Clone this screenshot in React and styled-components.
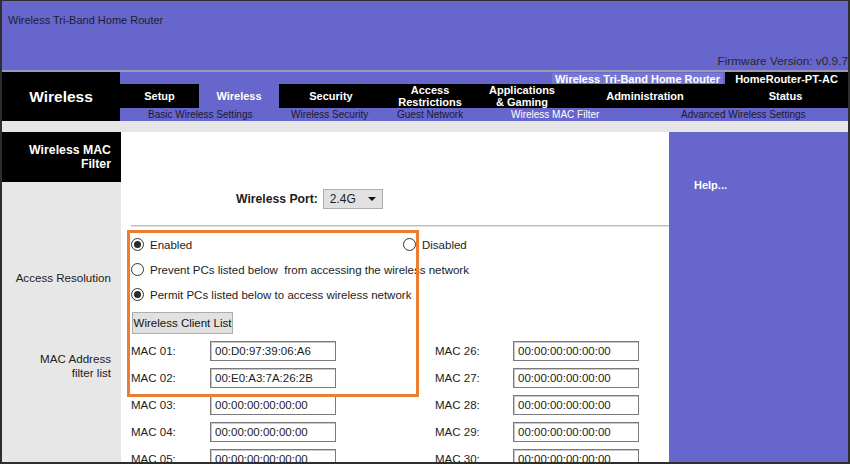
import React from "react";
import styled, { createGlobalStyle } from "styled-components";

const GlobalStyle = createGlobalStyle`
    body {
        margin: 0;
        font-family: "Liberation Sans", Arial, sans-serif;
        background: #ffffff;
    }
`;

const Frame = styled.div`
    width: 850px;
    height: 464px;
    box-sizing: border-box;
    border: 2px solid #2e2e2e;
    border-top-width: 1px;
    overflow: hidden;
    display: flex;
    flex-direction: column;
    color: #1c1c1c;
`;

const Header = styled.div`
    height: 71px;
    flex: none;
    box-sizing: border-box;
    background: #6666cc;
    border-bottom: 2px solid #9a9ab4;
    display: flex;
    flex-direction: column;
    justify-content: space-between;
    padding: 12px 0 2px 6px;
    font-size: 11px;
    line-height: 14px;
    color: #1e1e2e;
`;

const Firmware = styled.div`
    align-self: flex-end;
    font-size: 11.8px;
    color: #262626;
`;

const Nav = styled.div`
    display: flex;
    height: 49px;
    flex: none;
`;

const Brand = styled.div`
    width: 118px;
    background: #000;
    color: #fff;
    font-weight: bold;
    font-size: 15.5px;
    display: flex;
    align-items: center;
    justify-content: center;
    padding-top: 1px;
    box-sizing: border-box;
`;

const NavBody = styled.div`
    flex: 1;
    display: flex;
    flex-direction: column;
`;

const ModelRow = styled.div`
    height: 12px;
    background: #6666cc;
    display: flex;
    justify-content: flex-end;
    align-items: stretch;
    font-weight: bold;
    font-size: 11px;
    line-height: 12px;
    color: #fff;
`;

const ModelName = styled.span`
    background: #7777d6;
    padding: 0 3px;
    margin: 1px 2px 0 0;
`;

const DeviceName = styled.span`
    width: 123px;
    background: #000;
    text-align: center;
    padding-top: 1px;
`;

const Tabs = styled.div`
    height: 24px;
    display: flex;
    background: #000;
`;

const Tab = styled.div`
    width: ${(p) => (p.$w ? `${p.$w}px` : "auto")};
    flex: ${(p) => (p.$w ? "none" : "1")};
    background: ${(p) => (p.$active ? "#6666cc" : "#000")};
    color: #fff;
    font-weight: bold;
    font-size: 11px;
    line-height: 12px;
    display: flex;
    align-items: center;
    justify-content: center;
    text-align: center;
`;

const SubNav = styled.div`
    height: 13px;
    background: #6666cc;
    display: flex;
    padding-left: 28px;
    font-size: 10px;
    line-height: 13px;
`;

const SubLink = styled.span`
    width: ${(p) => (p.$w ? `${p.$w}px` : "auto")};
    flex: none;
    color: ${(p) => (p.$active ? "#ffffff" : "#1a1a30")};
    white-space: nowrap;
`;

const Strip = styled.div`
    height: 11px;
    flex: none;
    background: #e6e6e6;
`;

const Main = styled.div`
    flex: 1;
    display: flex;
    min-height: 0;
`;

const Side = styled.div`
    width: 119px;
    background: #e7e7e7;
    display: flex;
    flex-direction: column;
    align-items: stretch;
`;

const PageTitle = styled.div`
    height: 50px;
    box-sizing: border-box;
    background: #000;
    color: #fff;
    font-weight: bold;
    font-size: 12.3px;
    line-height: 14px;
    text-align: right;
    padding: 11px 10px 0 0;
`;

const SideLabel = styled.div`
    margin-top: ${(p) => p.$top}px;
    text-align: right;
    padding-right: 10px;
    font-size: 11.6px;
    line-height: 14px;
    color: #222;
`;

const Content = styled.div`
    width: 548px;
    background: #fff;
    position: relative;
    display: flex;
    flex-direction: column;
    font-size: 11.5px;
`;

const PortRow = styled.div`
    margin: 57px 0 0 115px;
    display: flex;
    align-items: center;
    gap: 5px;
    height: 20px;
`;

const PortLabel = styled.span`
    font-weight: bold;
    font-size: 12.2px;
`;

const Select = styled.div`
    width: 60px;
    height: 20px;
    box-sizing: border-box;
    background: #e1e1e1;
    border: 1px solid #adadad;
    display: flex;
    align-items: center;
    justify-content: space-between;
    padding: 0 6px 0 6px;
    font-size: 12px;
`;

const Caret = styled.span`
    width: 0;
    height: 0;
    border-left: 4px solid transparent;
    border-right: 4px solid transparent;
    border-top: 4px solid #111;
`;

const Rule = styled.div`
    margin: 16px 0 0 10px;
    border-top: 1px solid #bcbcbc;
    border-bottom: 1px solid #e2e2e2;
`;

const Options = styled.div`
    margin-top: 5px;
    padding-left: 10px;
    display: flex;
    flex-direction: column;
`;

const OptionRow = styled.div`
    height: 25px;
    display: flex;
    align-items: center;
`;

const Option = styled.label`
    width: ${(p) => (p.$w ? `${p.$w}px` : "auto")};
    display: flex;
    align-items: center;
    gap: 6px;
    white-space: nowrap;
`;

const Radio = styled.span`
    width: 13px;
    height: 13px;
    box-sizing: border-box;
    border-radius: 50%;
    border: 1px solid #333;
    background: #fff;
    display: flex;
    align-items: center;
    justify-content: center;
    flex: none;
    &::after {
        content: "";
        width: 7px;
        height: 7px;
        border-radius: 50%;
        background: ${(p) => (p.$on ? "#2a2a2a" : "transparent")};
    }
`;

const Button = styled.button`
    margin: 5px 0 0 11px;
    width: 101px;
    height: 22px;
    background: #e1e1e1;
    border: 1px solid #adadad;
    border-radius: 0;
    font-family: "Liberation Sans", Arial, sans-serif;
    font-size: 11.5px;
    white-space: nowrap;
    color: #111;
    padding: 0;
`;

const MacGrid = styled.div`
    margin-top: 3px;
    padding-left: 10px;
    display: grid;
    grid-template-columns: 79px 126px 99px 78px 126px;
    grid-auto-rows: 27px;
    align-items: center;
`;

const MacLabel = styled.span``;

const MacInput = styled.div`
    height: 20px;
    box-sizing: border-box;
    border: 1px solid #7a7a7a;
    box-shadow: inset 1px 1px 0 #c8c8c8;
    padding-left: 4px;
    line-height: 18px;
    background: #fff;
`;

const Gap = styled.span``;

const Highlight = styled.div`
    position: absolute;
    left: 6px;
    top: 98px;
    width: 292px;
    height: 167px;
    box-sizing: border-box;
    border: 3px solid #ed7d31;
    pointer-events: none;
`;

const Help = styled.div`
    flex: 1;
    background: #6666cc;
    color: #fff;
    font-weight: bold;
    font-size: 11px;
    padding: 47px 0 0 25px;
`;

const tabs = [
    { label: "Setup", w: 79 },
    { label: "Wireless", w: 80, active: true },
    { label: "Security", w: 104 },
    { label: ["Access", "Restrictions"], w: 94 },
    { label: ["Applications", "& Gaming"], w: 90 },
    { label: "Administration", w: 156 },
    { label: "Status" },
];

const subLinks = [
    { label: "Basic Wireless Settings", w: 143 },
    { label: "Wireless Security", w: 106 },
    { label: "Guest Network", w: 114 },
    { label: "Wireless MAC Filter", w: 170, active: true },
    { label: "Advanced Wireless Settings" },
];

const macs = [
    ["01", "00:D0:97:39:06:A6", "26"],
    ["02", "00:E0:A3:7A:26:2B", "27"],
    ["03", "00:00:00:00:00:00", "28"],
    ["04", "00:00:00:00:00:00", "29"],
    ["05", "00:00:00:00:00:00", "30"],
];

export default function App() {
    return (
        <>
            <GlobalStyle />
            <Frame>
                <Header>
                    <div>Wireless Tri-Band Home Router</div>
                    <Firmware>Firmware Version: v0.9.7</Firmware>
                </Header>
                <Nav>
                    <Brand>Wireless</Brand>
                    <NavBody>
                        <ModelRow>
                            <ModelName>Wireless Tri-Band Home Router</ModelName>
                            <DeviceName>HomeRouter-PT-AC</DeviceName>
                        </ModelRow>
                        <Tabs>
                            {tabs.map((t, i) => (
                                <Tab key={i} $w={t.w} $active={t.active}>
                                    {Array.isArray(t.label) ? (
                                        <span>
                                            {t.label[0]}
                                            <br />
                                            {t.label[1]}
                                        </span>
                                    ) : (
                                        t.label
                                    )}
                                </Tab>
                            ))}
                        </Tabs>
                        <SubNav>
                            {subLinks.map((s) => (
                                <SubLink key={s.label} $w={s.w} $active={s.active}>
                                    {s.label}
                                </SubLink>
                            ))}
                        </SubNav>
                    </NavBody>
                </Nav>
                <Strip />
                <Main>
                    <Side>
                        <PageTitle>
                            Wireless MAC
                            <br />
                            Filter
                        </PageTitle>
                        <SideLabel $top={89}>Access Resolution</SideLabel>
                        <SideLabel $top={67}>
                            MAC Address
                            <br />
                            filter list
                        </SideLabel>
                    </Side>
                    <Content>
                        <PortRow>
                            <PortLabel>Wireless Port:</PortLabel>
                            <Select>
                                2.4G
                                <Caret />
                            </Select>
                        </PortRow>
                        <Rule />
                        <Options>
                            <OptionRow>
                                <Option $w={272}>
                                    <Radio $on />
                                    Enabled
                                </Option>
                                <Option>
                                    <Radio />
                                    Disabled
                                </Option>
                            </OptionRow>
                            <OptionRow>
                                <Option>
                                    <Radio />
                                    Prevent PCs listed below&nbsp; from accessing the wireless network
                                </Option>
                            </OptionRow>
                            <OptionRow>
                                <Option>
                                    <Radio $on />
                                    Permit PCs listed below to access wireless network
                                </Option>
                            </OptionRow>
                        </Options>
                        <div>
                            <Button>Wireless Client List</Button>
                        </div>
                        <MacGrid>
                            {macs.map(([a, v, b]) => (
                                <React.Fragment key={a}>
                                    <MacLabel>MAC {a}:</MacLabel>
                                    <MacInput>{v}</MacInput>
                                    <Gap />
                                    <MacLabel>MAC {b}:</MacLabel>
                                    <MacInput>00:00:00:00:00:00</MacInput>
                                </React.Fragment>
                            ))}
                        </MacGrid>
                        <Highlight />
                    </Content>
                    <Help>Help...</Help>
                </Main>
            </Frame>
        </>
    );
}
